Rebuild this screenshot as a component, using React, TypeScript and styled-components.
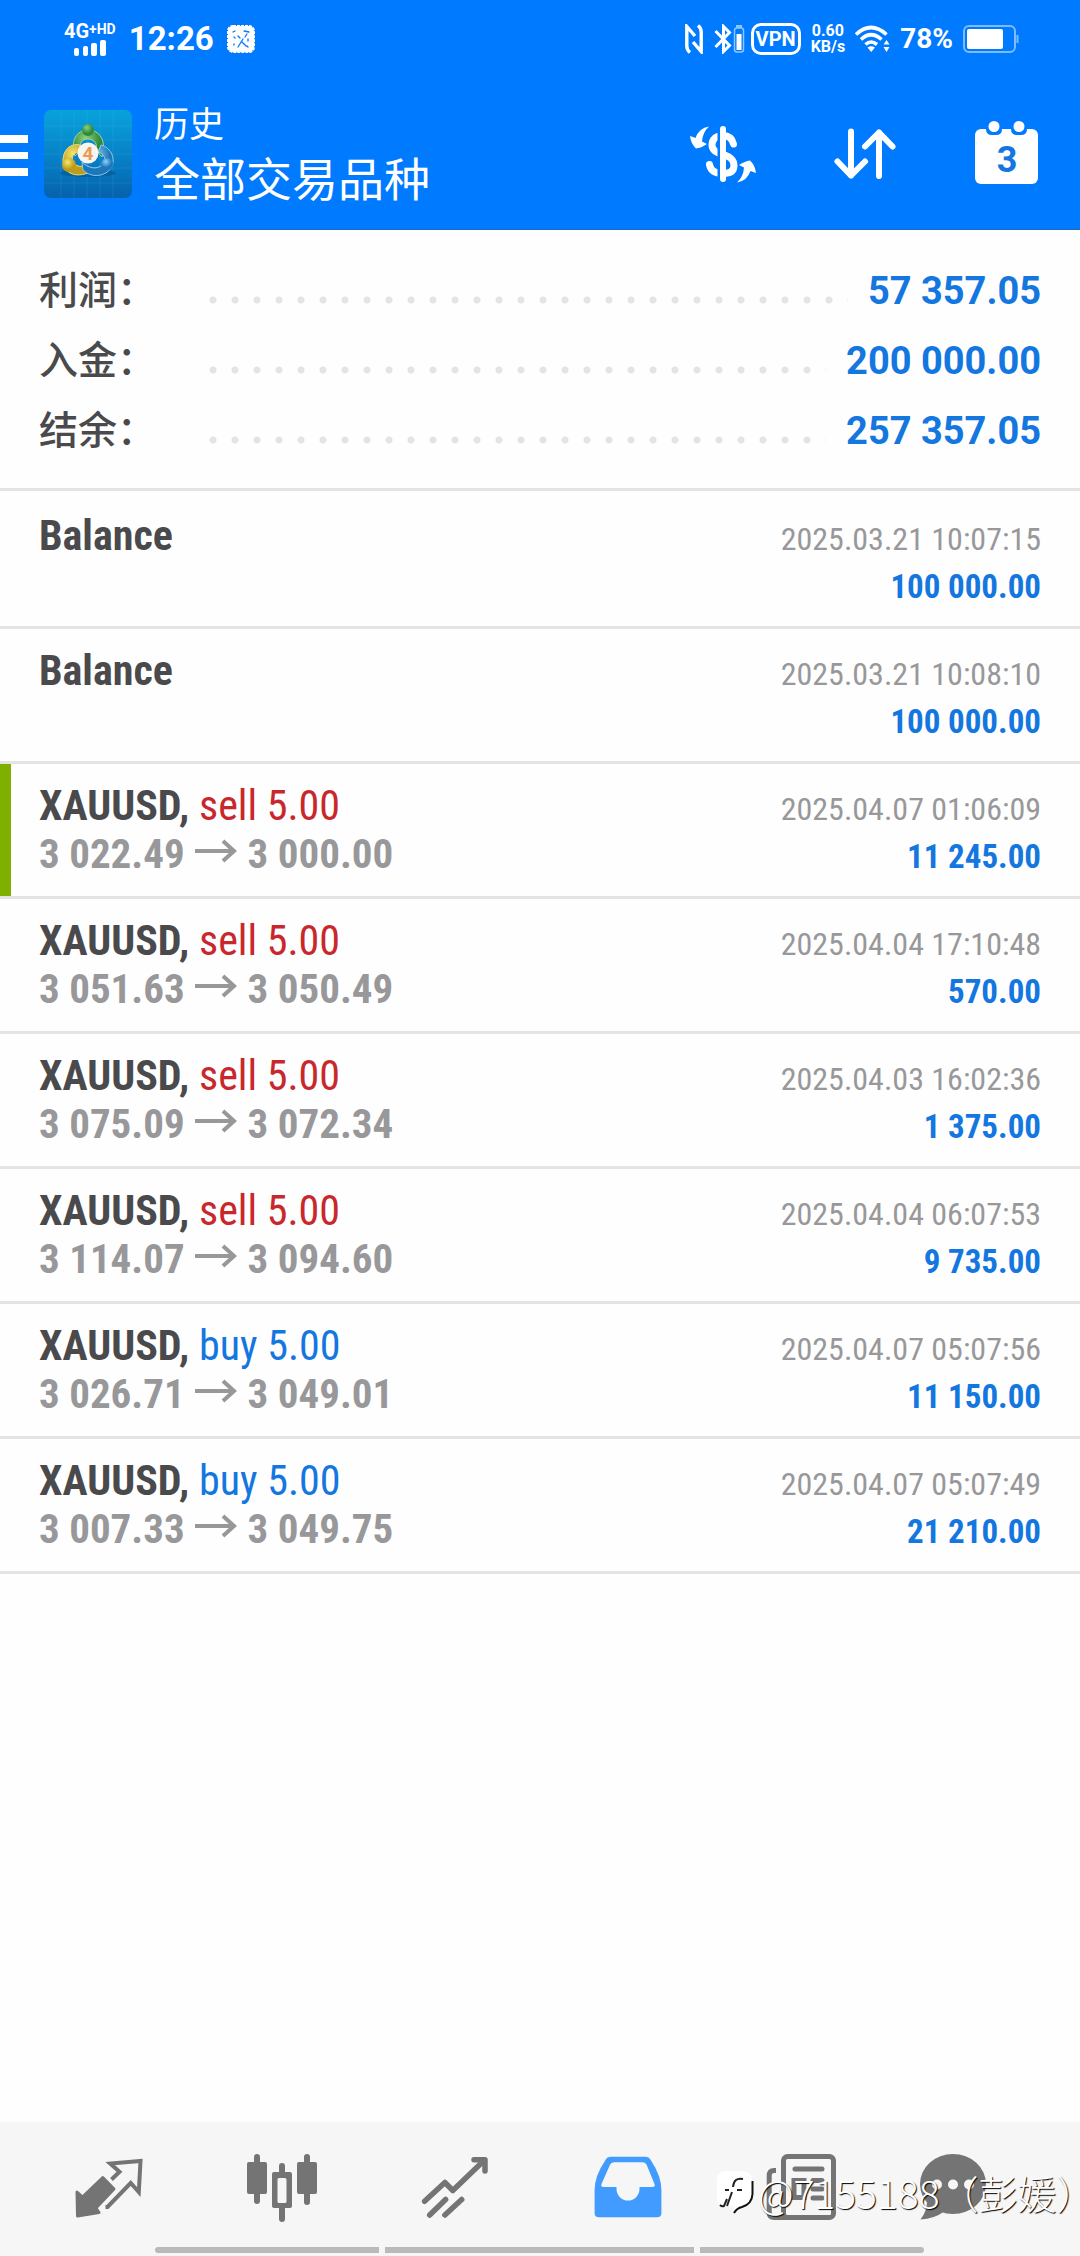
import React from "react";
import styled, { createGlobalStyle } from "styled-components";

const sans = 'Roboto, "Noto Sans CJK SC", sans-serif';
const condensed = '"Roboto Condensed", "Noto Sans CJK SC", sans-serif';
const cjk = '"Noto Sans CJK SC", sans-serif';

const color = {
  brand: "#007aff",
  value: "#1477e0",
  text: "#4a4a4d",
  muted: "#98989a",
  sell: "#c8282c",
  line: "#e4e4e4",
  icon: "#747474",
  active: "#429cff",
};

const GlobalStyle = createGlobalStyle`
  *, *::before, *::after { box-sizing: border-box; }
  body { margin: 0; background: #fefefe; }
  svg { display: block; }
`;

const Screen = styled.div`
  display: flex;
  flex-direction: column;
  min-height: 100vh;
  font-family: ${sans};
  color: ${color.text};
`;

const Header = styled.header`
  background: ${color.brand};
  border-bottom: 1px solid #1c6cc4;
  color: #fff;
`;

const StatusBar = styled.div`
  display: flex;
  align-items: center;
  justify-content: space-between;
  height: 78px;
  padding: 0 61px 0 64px;
`;

const StatusGroup = styled.div<{ $gap: number }>`
  display: flex;
  align-items: center;
  gap: ${(p) => p.$gap}px;
`;

const Network = styled.div`
  display: flex;
  flex-direction: column;
  align-items: center;
  gap: 1px;
`;

const NetworkLabel = styled.div`
  display: flex;
  align-items: flex-start;
  font-size: 20px;
  font-weight: 700;
  line-height: 16px;
`;

const Superscript = styled.span`
  font-size: 14px;
  line-height: 12px;
`;

const Clock = styled.time`
  font-size: 33px;
  font-weight: 700;
  line-height: 36px;
`;

const VpnBadge = styled.span`
  display: flex;
  align-items: center;
  justify-content: center;
  width: 50px;
  height: 32px;
  border: 3px solid #fff;
  border-radius: 10px;
  font-size: 20px;
  font-weight: 700;
`;

const Speed = styled.div`
  font-size: 16px;
  font-weight: 700;
  line-height: 16px;
  text-align: center;
`;

const Percent = styled.span`
  font-size: 28px;
  font-weight: 700;
  line-height: 32px;
`;

const AppBar = styled.div`
  display: flex;
  align-items: center;
  height: 151px;
  padding-right: 37px;
`;

const IconButton = styled.button`
  display: block;
  padding: 0;
  border: 0;
  background: none;
  color: inherit;
`;

const MenuButton = styled(IconButton)`
  margin-right: 16px;
`;

const Titles = styled.div`
  flex: 1;
  margin-left: 22px;
  font-family: ${cjk};
  font-weight: 400;
`;

const Caption = styled.div`
  font-size: 35px;
  line-height: 44px;
`;

const Title = styled.h1`
  margin: 0;
  font-size: 46px;
  font-weight: inherit;
  line-height: 64px;
`;

const Actions = styled.div`
  display: flex;
  gap: 70px;
`;

const Summary = styled.dl`
  margin: 0;
  padding: 25px 39px 23px;
  border-bottom: 3px solid ${color.line};
`;

const SummaryRow = styled.div`
  display: flex;
  align-items: baseline;
  height: 70px;
  padding-top: 4px;
`;

const SummaryLabel = styled.dt`
  width: 163px;
  font-family: ${cjk};
  font-size: 39px;
  font-weight: 500;
  line-height: 56px;
`;

const Leader = styled.span`
  flex: 1;
  height: 8px;
  margin: 0 20px 4px 0;
  background: radial-gradient(circle at center, ${color.line} 3px, transparent 4px) 0 0 / 22px 8px repeat-x;
`;

const SummaryValue = styled.dd`
  margin: 0;
  color: ${color.value};
  font-size: 38px;
  font-weight: 700;
  line-height: 56px;
`;

const Deals = styled.ul`
  flex: 1;
  margin: 0;
  padding: 3px 0 0;
  list-style: none;
`;

const Deal = styled.li<{ $marked?: boolean }>`
  display: flex;
  align-items: baseline;
  justify-content: space-between;
  height: 135px;
  padding: 18px 39px 0;
  border-bottom: 3px solid ${color.line};
  background: linear-gradient(#7fb000, #7fb000) 0 0 / ${(p) => (p.$marked ? 11 : 0)}px 100% no-repeat;
  font-family: ${condensed};
  line-height: 48px;
`;

const DealMain = styled.div`
  font-size: 42px;
`;

const DealSide = styled.div`
  font-size: 33px;
  text-align: right;
`;

const Line = styled.div`
  height: 48px;
  white-space: nowrap;
`;

const Symbol = styled.span`
  font-weight: 700;
`;

const Side = styled.span<{ $side: "buy" | "sell" }>`
  color: ${(p) => (p.$side === "buy" ? color.value : color.sell)};
`;

const Prices = styled(Line)`
  color: ${color.muted};
  font-size: 41px;
  font-weight: 700;
`;

const ArrowMark = styled.svg`
  display: inline;
  vertical-align: baseline;
`;

const DateLine = styled(Line)`
  color: ${color.muted};
  font-size: 32px;
`;

const Amount = styled(Line)`
  color: ${color.value};
  font-weight: 700;
`;

const Footer = styled.footer`
  position: relative;
  background: #f6f6f6;
`;

const Tabs = styled.nav`
  display: grid;
  grid-template-columns: repeat(6, 1fr);
  padding: 30px 20px 23px 22px;
`;

const Tab = styled.a<{ $active?: boolean; $inset?: number }>`
  display: flex;
  justify-content: center;
  padding-right: ${(p) => p.$inset ?? 0}px;
  color: ${(p) => (p.$active ? color.active : color.icon)};
`;

const GestureBar = styled.div`
  display: flex;
  gap: 6px;
  padding: 0 156px 3px 155px;
`;

const Gesture = styled.span<{ $grow: number; $radius?: string }>`
  flex: ${(p) => p.$grow};
  height: 6px;
  border-radius: ${(p) => p.$radius ?? "0"};
  background: #bababa;
`;

const Watermark = styled.div`
  position: absolute;
  top: 42px;
  right: 0;
  display: flex;
  align-items: center;
  gap: 4px;
  width: 364px;
  color: #fff;
  font-family: ${cjk};
  font-size: 39px;
  font-weight: 300;
  line-height: 56px;
  text-shadow: 1px 1px 1px #000;
  pointer-events: none;
`;

const Author = styled.span`
  flex: 1;
`;

const SignalBars = () => (
  <svg width="32" height="16" viewBox="0 0 32 16" fill="#fff">
    <rect x="0" y="8" width="5" height="8" rx="2" />
    <rect x="9" y="6" width="5" height="10" rx="2" />
    <rect x="17" y="3" width="6" height="13" rx="2" />
    <rect x="26" y="0" width="6" height="16" rx="2" />
  </svg>
);

const NoticeIcon = () => (
  <svg width="28" height="28" viewBox="0 0 28 28">
    <rect x="1" y="1" width="26" height="26" rx="5" fill="#fff" stroke="#fff" strokeWidth="2" strokeDasharray="3 1" />
    <g stroke={color.brand} strokeWidth="1.3" strokeLinecap="round" fill="none">
      <path d="M6 7l2-1M17 6l5 1M7 12l1 1M11 11l2 2M20 9l-2 3M16 14l-5 8M15 17l4 4M21 14v2M7 19v1M20 21l1 1" />
    </g>
  </svg>
);

const NfcIcon = () => (
  <svg width="18" height="30" viewBox="0 0 18 30" fill="none" stroke="#fff" strokeWidth="3.4">
    <path d="M5 28.5Q1.8 26 1.8 22V2.5L10 12" />
    <path d="M13 1.5Q16.2 4 16.2 8V27.5L8 18" />
  </svg>
);

const BluetoothIcon = () => (
  <svg width="31" height="30" viewBox="0 0 31 30" fill="none">
    <path d="M1.5 7L15.5 21.5L9.5 27.5V2.5L15.5 8.5L1.5 23" stroke="#fff" strokeWidth="3" />
    <rect x="20.5" y="4" width="9" height="24" rx="2.5" stroke="#8cc6ff" strokeWidth="1.5" />
    <rect x="22" y="1" width="6" height="3" fill="#8cc6ff" />
    <rect x="22.5" y="10" width="5" height="16" fill="#fff" />
  </svg>
);

const WifiIcon = () => (
  <svg width="35" height="28" viewBox="0 0 35 28" fill="none" stroke="#fff" strokeWidth="3.6">
    <path d="M1 9.5Q16 -4.5 31.5 9.5" />
    <path d="M6 14.5Q16 5 26.5 14.5" />
    <path d="M10.5 19.5Q16 14.5 22 19.5" />
    <path d="M12.5 22.5Q16 20 20 22.5L16.2 27Z" fill="#fff" stroke="none" />
    <path d="M28.5 19.5L31.5 15L34.5 19.5ZM28.5 22L31.5 27L34.5 22Z" fill="#fff" stroke="none" />
  </svg>
);

const BatteryIcon = () => (
  <svg width="56" height="28" viewBox="0 0 56 28" fill="none">
    <rect x="1" y="1" width="51" height="26" rx="5" stroke="#7fbcff" strokeWidth="2" />
    <rect x="4" y="4" width="36" height="20" rx="2" fill="#fff" />
    <path d="M54.5 10v8" stroke="#7fbcff" strokeWidth="2" />
  </svg>
);

const MenuIcon = () => (
  <svg width="28" height="46" viewBox="0 -4 28 46" fill="#fff">
    <rect y="0" width="28" height="8" />
    <rect y="17" width="28" height="7" />
    <rect y="33" width="28" height="8" />
  </svg>
);

const LogoIcon = () => (
  <svg width="88" height="88" viewBox="0 0 88 88" role="img" aria-label="MetaTrader 4">
    <defs>
      <linearGradient id="tile" x1="0" y1="0" x2="0" y2="1">
        <stop offset="0" stopColor="#08a3dc" />
        <stop offset="0.55" stopColor="#0780c6" />
        <stop offset="1" stopColor="#0562ab" />
      </linearGradient>
      <radialGradient id="green" cx="0.4" cy="0.3">
        <stop offset="0" stopColor="#8fd07c" />
        <stop offset="1" stopColor="#2c8a3c" />
      </radialGradient>
      <radialGradient id="yellow" cx="0.4" cy="0.3">
        <stop offset="0" stopColor="#f6e672" />
        <stop offset="1" stopColor="#bd9d18" />
      </radialGradient>
      <radialGradient id="blue" cx="0.4" cy="0.3">
        <stop offset="0" stopColor="#8fd2f6" />
        <stop offset="1" stopColor="#1d76ba" />
      </radialGradient>
    </defs>
    <rect width="88" height="88" rx="7" fill="url(#tile)" />
    <path d="M17 0V88M30 0V88M43 0V88M56 0V88M69 0V88M0 16H88M0 30H88M0 44H88M0 58H88M0 73H88" stroke="#5cc8f0" strokeWidth="1" opacity="0.15" />
    <ellipse cx="44" cy="63" rx="28" ry="4" fill="#04406f" opacity="0.35" />
    <path d="M31 46C26 30 33 20 44 20S63 30 58 47L52 40C54 34 50 29 44 29S35 33 37 40Z" fill="url(#green)" stroke="#a9d493" strokeWidth="1" />
    <path d="M44 63C28 69 18 60 19 49S28 33 36 35L34 42C28 44 27 49 30 53S38 57 41 55Z" fill="url(#yellow)" stroke="#e6da85" strokeWidth="1" />
    <path d="M57 35C68 38 72 50 67 58S48 69 39 60L38 52C44 58 53 60 58 55S61 44 54 42Z" fill="url(#blue)" stroke="#8ccbed" strokeWidth="1" />
    <circle cx="44" cy="20" r="6" fill="url(#green)" />
    <circle cx="25" cy="55" r="7" fill="url(#yellow)" />
    <circle cx="63" cy="54" r="6" fill="url(#blue)" />
    <circle cx="44" cy="43" r="10.5" fill="#f8f4ef" />
    <text x="44" y="50" textAnchor="middle" fontFamily="Roboto, sans-serif" fontWeight="700" fontSize="19" fill="#ec9a55">4</text>
  </svg>
);

const swapArrow = "M22 8.5Q12 10 8.5 20L3 18Q4 26 9 30.5Q14 30 20 26L15 23.5Q15.5 14.5 22 8.5Z";

const CurrencyIcon = () => (
  <svg width="72" height="72" viewBox="0 0 72 72" fill="#fff">
    <path d="M46.5 26C45 20 41 17.5 36 17.5C29 17.5 25 21.5 25 27C25 33 30 35 36 36.5C43 38.5 47 41.5 47 47.5C47 53 43 55.5 36 55.5C28 55.5 23.5 53 22.5 46.5" fill="none" stroke="#fff" strokeWidth="7" strokeLinecap="round" />
    <path d="M32 12V60" stroke={color.brand} strokeWidth="3" />
    <path d="M36 11V61" stroke="#fff" strokeWidth="6" strokeLinecap="round" />
    <path d={swapArrow} />
    <path transform="rotate(180 36 36.5)" d={swapArrow} />
  </svg>
);

const SortIcon = () => (
  <svg width="72" height="72" viewBox="0 0 72 72" fill="none" stroke="#fff" strokeWidth="6" strokeLinecap="round" strokeLinejoin="round">
    <path d="M22 13.5V57.5M8.5 43.5L22 57.5L36 43.5" />
    <path d="M50 58V14.5M36 28.5L50 14.5L63.5 28.5" />
  </svg>
);

const CalendarIcon = () => (
  <svg width="72" height="72" viewBox="0 0 72 72">
    <rect x="4" y="11" width="63" height="55" rx="6" fill="#fff" />
    <path d="M15 8H31V11Q31 17 25 17H21Q15 17 15 11ZM40 8H56V11Q56 17 50 17H46Q40 17 40 11Z" fill={color.brand} />
    <circle cx="23" cy="8.5" r="5.5" fill="#fff" />
    <circle cx="48" cy="8.5" r="5.5" fill="#fff" />
    <text x="36" y="54" textAnchor="middle" fontFamily="Roboto, sans-serif" fontWeight="700" fontSize="36" fill="#1477e0">3</text>
  </svg>
);

const QuotesIcon = () => (
  <svg width="72" height="72" viewBox="0 0 72 72" fill="none">
    <path d="M4 40L9.5 45L29.8 25.5L41 37L23 56L26 60.5L4.5 64Z" fill="currentColor" stroke="currentColor" strokeWidth="3" strokeLinejoin="round" />
    <path d="M38.5 27.5L46.5 19.7L37.2 11.5L67.5 9L65.8 40L57.7 31L34.5 55H32.5" stroke="currentColor" strokeWidth="4" />
  </svg>
);

const ChartIcon = () => (
  <svg width="72" height="72" viewBox="0 0 72 72" fill="none" stroke="currentColor" strokeWidth="6" strokeLinecap="round">
    <path d="M11 5V49M36 14V22M36 57V67M61 5V50" />
    <rect x="1" y="10" width="20" height="32" rx="2" fill="currentColor" stroke="none" />
    <rect x="51" y="10" width="20" height="32" rx="2" fill="currentColor" stroke="none" />
    <path fillRule="evenodd" stroke="none" fill="currentColor" d="M28 20H44Q46 20 46 22V54Q46 56 44 56H28Q26 56 26 54V22Q26 20 28 20ZM33 26Q31.5 26 31.5 27.5V49.5Q31.5 51 33 51H39Q40.5 51 40.5 49.5V27.5Q40.5 26 39 26Z" />
  </svg>
);

const TradeIcon = () => (
  <svg width="72" height="72" viewBox="0 0 72 72" fill="none" stroke="currentColor" strokeWidth="5.5" strokeLinecap="round" strokeLinejoin="round">
    <path d="M5.6 49.3L25.9 30.5L33.8 38.5L65 8.5" />
    <path d="M55 7.7H66V19" />
    <path d="M10.7 63L26.6 47.5M25.9 63L42.7 47.5" />
  </svg>
);

const HistoryIcon = () => (
  <svg width="72" height="72" viewBox="0 0 72 72" fill="currentColor" fillRule="evenodd">
    <path d="M13.5 8Q15 4.7 19 4.7H53Q57 4.7 58.7 8Q69.4 24 69.4 38V61Q69.4 65.3 65 65.3H7Q2.6 65.3 2.6 61V38Q2.6 24 13.5 8ZM22 10.3Q19 10.3 18 12.8L9.5 32Q8.5 35 11.5 35H24.5V37A11.5 11.5 0 0 0 47.5 37V35H60.5Q63.5 35 62.5 32L54.6 12.8Q53.5 10.3 51 10.3Z" />
  </svg>
);

const NewsIcon = () => (
  <svg width="72" height="72" viewBox="0 0 72 72" fill="none" stroke="currentColor" strokeWidth="5">
    <rect x="18.5" y="4.5" width="50" height="61" rx="4" />
    <path d="M11 18.5H9Q4.2 18.5 4.2 24V60Q4.2 65.5 9 65.5H22" />
    <path d="M30 17H57M48 28.5H57M48 37H57M48 46H57" strokeLinecap="round" />
    <rect x="29" y="28.5" width="10" height="17" />
  </svg>
);

const ChatIcon = () => (
  <svg width="72" height="72" viewBox="0 0 72 72" fill="currentColor">
    <ellipse cx="36" cy="32" rx="33" ry="30" />
    <path d="M10 50Q10 59 3.5 67.5Q17 67 28 59Z" />
    <g fill="#f6f6f6">
      <circle cx="20" cy="32.5" r="5" />
      <circle cx="36" cy="32.5" r="5" />
      <circle cx="52" cy="32.5" r="5" />
    </g>
  </svg>
);

const AuthorMark = () => (
  <svg width="38" height="44" viewBox="0 0 38 44" fill="none">
    <path d="M9 1H26Q36 1 36 11V24Q36 36 23 38L18 42V36H9Q1 36 1 28V11Q1 1 9 1Z" fill="#fff" />
    <path d="M36.5 11V24Q36 34 26 37Q21 38 18 43" stroke="#111" strokeWidth="2" />
    <path d="M27 9Q18 7 17 17M9 20H13M21 20H26M16 22L11 36M11 29L8 36Q6 37 4 35" stroke="#222" strokeWidth="2" />
  </svg>
);

const Arrow = () => (
  <ArrowMark width="44" height="34" viewBox="0 0 44 34" fill="none" stroke="currentColor" strokeWidth="4" role="img" aria-label="→">
    <path d="M1 17H41M29 7L40 17L29 27" />
  </ArrowMark>
);

const summary = [
  ["利润：", "57 357.05"],
  ["入金：", "200 000.00"],
  ["结余：", "257 357.05"],
];

type DealData = {
  side?: "buy" | "sell";
  open?: string;
  close?: string;
  date: string;
  amount: string;
  marked?: boolean;
};

const deals: DealData[] = [
  { date: "2025.03.21 10:07:15", amount: "100 000.00" },
  { date: "2025.03.21 10:08:10", amount: "100 000.00" },
  { side: "sell", open: "3 022.49", close: "3 000.00", date: "2025.04.07 01:06:09", amount: "11 245.00", marked: true },
  { side: "sell", open: "3 051.63", close: "3 050.49", date: "2025.04.04 17:10:48", amount: "570.00" },
  { side: "sell", open: "3 075.09", close: "3 072.34", date: "2025.04.03 16:02:36", amount: "1 375.00" },
  { side: "sell", open: "3 114.07", close: "3 094.60", date: "2025.04.04 06:07:53", amount: "9 735.00" },
  { side: "buy", open: "3 026.71", close: "3 049.01", date: "2025.04.07 05:07:56", amount: "11 150.00" },
  { side: "buy", open: "3 007.33", close: "3 049.75", date: "2025.04.07 05:07:49", amount: "21 210.00" },
];

export default function App() {
  return (
    <Screen lang="zh-CN">
      <GlobalStyle />
      <Header>
        <StatusBar>
          <StatusGroup $gap={13}>
            <Network>
              <NetworkLabel>
                4G<Superscript>+HD</Superscript>
              </NetworkLabel>
              <SignalBars />
            </Network>
            <Clock>12:26</Clock>
            <NoticeIcon />
          </StatusGroup>
          <StatusGroup $gap={6}>
            <StatusGroup $gap={11}>
              <NfcIcon />
              <BluetoothIcon />
            </StatusGroup>
            <StatusGroup $gap={10}>
              <VpnBadge>VPN</VpnBadge>
              <Speed>
                0.60
                <br />
                KB/s
              </Speed>
              <WifiIcon />
              <Percent>78%</Percent>
              <BatteryIcon />
            </StatusGroup>
          </StatusGroup>
        </StatusBar>
        <AppBar>
          <MenuButton aria-label="菜单">
            <MenuIcon />
          </MenuButton>
          <LogoIcon />
          <Titles>
            <Caption>历史</Caption>
            <Title>全部交易品种</Title>
          </Titles>
          <Actions>
            <IconButton aria-label="交易品种">
              <CurrencyIcon />
            </IconButton>
            <IconButton aria-label="排序">
              <SortIcon />
            </IconButton>
            <IconButton aria-label="日期">
              <CalendarIcon />
            </IconButton>
          </Actions>
        </AppBar>
      </Header>

      <Summary>
        {summary.map(([label, value]) => (
          <SummaryRow key={label}>
            <SummaryLabel>{label}</SummaryLabel>
            <Leader />
            <SummaryValue>{value}</SummaryValue>
          </SummaryRow>
        ))}
      </Summary>

      <Deals>
        {deals.map((deal) => (
          <Deal key={deal.date} $marked={deal.marked}>
            <DealMain>
              {deal.side ? (
                <>
                  <Line>
                    <Symbol>XAUUSD,</Symbol> <Side $side={deal.side}>{deal.side} 5.00</Side>
                  </Line>
                  <Prices>
                    {deal.open} <Arrow /> {deal.close}
                  </Prices>
                </>
              ) : (
                <Line>
                  <Symbol>Balance</Symbol>
                </Line>
              )}
            </DealMain>
            <DealSide>
              <DateLine>{deal.date}</DateLine>
              <Amount>{deal.amount}</Amount>
            </DealSide>
          </Deal>
        ))}
      </Deals>

      <Footer>
        <Tabs>
          <Tab href="#quotes" aria-label="行情"><QuotesIcon /></Tab>
          <Tab href="#chart" aria-label="图表"><ChartIcon /></Tab>
          <Tab href="#trade" aria-label="交易"><TradeIcon /></Tab>
          <Tab href="#history" aria-label="历史" $active><HistoryIcon /></Tab>
          <Tab href="#news" aria-label="新闻"><NewsIcon /></Tab>
          <Tab href="#messages" aria-label="消息" $inset={42}><ChatIcon /></Tab>
        </Tabs>
        <GestureBar>
          <Gesture $grow={224} $radius="3px 0 0 3px" />
          <Gesture $grow={309} />
          <Gesture $grow={224} $radius="0 3px 3px 0" />
        </GestureBar>
        <Watermark>
          <AuthorMark />
          <Author>@7155188（彭媛）</Author>
        </Watermark>
      </Footer>
    </Screen>
  );
}
